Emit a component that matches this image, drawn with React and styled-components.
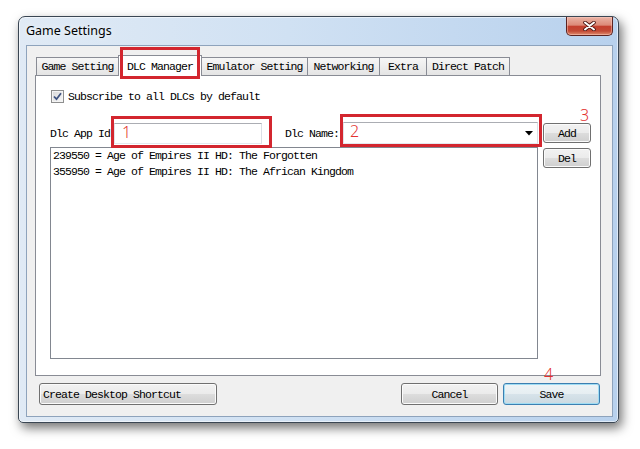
import React from 'react';
import styled, { createGlobalStyle } from 'styled-components';

const mono = `"Liberation Mono", "DejaVu Sans Mono", monospace`;

const Global = createGlobalStyle`
  html, body { margin: 0; padding: 0; background: #ffffff; }
  body { width: 640px; height: 449px; overflow: hidden; }
`;

const Page = styled.div`
  width: 640px;
  height: 449px;
  box-sizing: border-box;
  padding: 16px 0 0 18px;
  background: #ffffff;
`;

const Window = styled.div`
  width: 601px;
  height: 407px;
  box-sizing: border-box;
  border: 1px solid #3a4653;
  border-radius: 7px 7px 5px 5px;
  background: linear-gradient(to right, #e0eaf5 0%, #d0e1f3 45%, #b8d1ed 100%);
  box-shadow: 3px 5px 11px rgba(0, 0, 0, 0.55), inset 0 0 0 1px rgba(255, 255, 255, 0.55);
  display: flex;
  flex-direction: column;
  padding: 0 5px 5px 7px;
`;

const TitleBar = styled.div`
  height: 28px;
  display: flex;
  justify-content: space-between;
  align-items: flex-start;
`;

const Title = styled.div`
  font-family: "Segoe UI", "Noto Sans", sans-serif;
  font-size: 12.5px;
  line-height: 28px;
  color: #000;
  text-shadow: 0 0 6px rgba(255, 255, 255, 0.9);
`;

const CloseButton = styled.div`
  width: 47px;
  height: 19px;
  box-sizing: border-box;
  border: 1px solid #5b2320;
  border-top: none;
  border-radius: 0 0 5px 5px;
  background: linear-gradient(#eab3a5 0%, #dc8a78 45%, #c4402f 52%, #c24a35 78%, #e08e70 100%);
  box-shadow: inset 0 0 0 1px rgba(255, 210, 200, 0.45);
  display: flex;
  align-items: center;
  justify-content: center;
`;

const Client = styled.div`
  flex: 1;
  box-sizing: border-box;
  background: #f0f0f0;
  border: 1px solid #8ea3bc;
  padding: 9px 11px 11px 8px;
  display: flex;
  flex-direction: column;
  font-family: ${mono};
  font-size: 11.5px;
  letter-spacing: -0.9px;
  color: #000;
`;

const TabStrip = styled.div`
  height: 20px;
  display: flex;
  align-items: flex-end;
  padding-left: 1px;
`;

const Tab = styled.div`
  position: relative;
  width: ${p => p.$w}px;
  height: ${p => (p.$active ? 21 : 18)}px;
  margin-right: -1px;
  margin-bottom: ${p => (p.$active ? -1 : 0)}px;
  box-sizing: border-box;
  border: 1px solid #898c95;
  border-bottom: none;
  background: ${p => (p.$active ? '#ffffff' : 'linear-gradient(#f6f6f6, #e4e4e4)')};
  z-index: ${p => (p.$active ? 2 : 1)};
  display: flex;
  align-items: center;
  justify-content: center;
  white-space: nowrap;
`;

const Panel = styled.div`
  height: 301px;
  box-sizing: border-box;
  border: 1px solid #898c95;
  background: #ffffff;
  padding: 14px 8px 0 14px;
`;

const CheckRow = styled.div`
  height: 13px;
  display: flex;
  align-items: center;
  gap: 4px;
`;

const CheckBox = styled.div`
  width: 13px;
  height: 13px;
  margin-left: 1px;
  box-sizing: border-box;
  border: 1px solid #8e8f8f;
  background: linear-gradient(135deg, #d8d8d8, #f8f8f8);
  box-shadow: inset 0 0 0 1px #f4f4f4;
  display: flex;
  align-items: center;
  justify-content: center;
`;

const Grid = styled.div`
  margin-top: 19px;
  display: grid;
  grid-template-columns: 488px 48px;
  grid-template-rows: 22px 212px;
  column-gap: 5px;
  row-gap: 3px;
`;

const Fields = styled.div`
  display: flex;
  align-items: center;
`;

const FieldLabel = styled.div`
  width: ${p => p.$w}px;
  margin-left: ${p => p.$gap || 0}px;
  white-space: nowrap;
`;

const Anchor = styled.div`
  position: relative;
  display: flex;
`;

const TextInput = styled.div`
  width: 148px;
  height: 21px;
  box-sizing: border-box;
  border: 1px solid;
  border-color: #abadb3 #dbdfe6 #e3e9ef #e2e3ea;
  background: #ffffff;
`;

const Combo = styled.div`
  width: 195px;
  height: 22px;
  box-sizing: border-box;
  border: 1px solid;
  border-color: #abadb3 #dbdfe6 #e3e9ef #e2e3ea;
  background: #ffffff;
  display: flex;
  align-items: center;
  justify-content: flex-end;
  padding-right: 4px;
`;

const ListBox = styled.div`
  box-sizing: border-box;
  border: 1px solid #828790;
  background: #ffffff;
  padding: 0 2px;
  line-height: 16px;
  white-space: nowrap;
`;

const SideButtons = styled.div`
  display: flex;
  flex-direction: column;
`;

const Button = styled.div`
  position: relative;
  width: ${p => p.$w}px;
  height: ${p => p.$h}px;
  margin-top: ${p => p.$mt || 0}px;
  box-sizing: border-box;
  border: 1px solid ${p => (p.$default ? '#3c7fb1' : '#707070')};
  border-radius: 3px;
  background: ${p =>
    p.$default
      ? 'linear-gradient(#eef4f7 0%, #e6eef2 50%, #d7e3ea 50%, #cbd9e1 100%)'
      : 'linear-gradient(#f2f2f2 0%, #ebebeb 50%, #dddddd 50%, #cfcfcf 100%)'};
  box-shadow: ${p => (p.$default ? 'inset 0 0 0 1px #9fdcf3' : 'inset 0 0 0 1px #fbfbfb')};
  display: flex;
  align-items: center;
  justify-content: ${p => (p.$left ? 'flex-start' : 'center')};
  padding-left: ${p => (p.$left ? 3 : 0)}px;
  white-space: nowrap;
`;

const BottomRow = styled.div`
  margin-top: 7px;
  display: flex;
  align-items: center;
  gap: 5px;
  padding: 0 1px 0 4px;
`;

const Spacer = styled.div`
  flex: 1;
`;

const Annot = styled.span`
  position: absolute;
  pointer-events: none;
  box-sizing: border-box;
  border: 3px solid #d3262f;
  top: ${p => p.$t}px;
  right: ${p => p.$r}px;
  bottom: ${p => p.$b}px;
  left: ${p => p.$l}px;
  z-index: 5;
`;

const Num = styled.span`
  position: absolute;
  left: ${p => p.$x}px;
  top: ${p => p.$y}px;
  font-family: "Noto Sans", "Open Sans", sans-serif;
  font-weight: 300;
  font-size: 16px;
  line-height: 16px;
  letter-spacing: 0;
  color: #e3312f;
  z-index: 6;
`;

const tabs = [
  { label: 'Game Setting', w: 83 },
  { label: 'DLC Manager', w: 84, active: true },
  { label: 'Emulator Setting', w: 107 },
  { label: 'Networking', w: 73 },
  { label: 'Extra', w: 48 },
  { label: 'Direct Patch', w: 84 },
];

const dlcs = [
  '239550 = Age of Empires II HD: The Forgotten',
  '355950 = Age of Empires II HD: The African Kingdom',
];

export default function App() {
  return (
    <>
      <Global />
      <Page>
        <Window>
          <TitleBar>
            <Title>Game Settings</Title>
            <CloseButton>
              <svg width="13" height="10" viewBox="0 0 13 10">
                <path d="M2 1.5 L11 8.5 M11 1.5 L2 8.5" stroke="#4a1512" strokeWidth="3.6" strokeLinecap="round" />
                <path d="M2 1.5 L11 8.5 M11 1.5 L2 8.5" stroke="#ffffff" strokeWidth="2" strokeLinecap="round" />
              </svg>
            </CloseButton>
          </TitleBar>
          <Client>
            <TabStrip>
              {tabs.map(t => (
                <Tab key={t.label} $w={t.w} $active={t.active}>
                  {t.label}
                  {t.active && <Annot $t={-9} $r={1} $b={-3} $l={1} />}
                </Tab>
              ))}
            </TabStrip>
            <Panel>
              <CheckRow>
                <CheckBox>
                  <svg width="9" height="9" viewBox="0 0 9 9">
                    <path d="M1 4.5 L3.5 7.2 L8 1.2" fill="none" stroke="#3f5380" strokeWidth="1.8" />
                  </svg>
                </CheckBox>
                <span>Subscribe to all DLCs by default</span>
              </CheckRow>
              <Grid>
                <Fields>
                  <FieldLabel $w={64}>Dlc App Id</FieldLabel>
                  <Anchor>
                    <TextInput />
                    <Annot $t={-7} $r={-10} $b={-4} $l={-3} />
                    <Num $x={8} $y={1}>1</Num>
                  </Anchor>
                  <FieldLabel $w={58} $gap={23}>Dlc Name:</FieldLabel>
                  <Anchor>
                    <Combo>
                      <svg width="8" height="5" viewBox="0 0 8 5">
                        <path d="M0 0 H8 L4 4.5 Z" fill="#000" />
                      </svg>
                    </Combo>
                    <Annot $t={-8} $r={-4} $b={-3} $l={-3} />
                    <Num $x={7} $y={1}>2</Num>
                  </Anchor>
                </Fields>
                <SideButtons>
                  <Button $w={48} $h={20} $mt={1}>
                    Add
                    <Num $x={36} $y={-17}>3</Num>
                  </Button>
                </SideButtons>
                <ListBox>
                  {dlcs.map(d => (
                    <div key={d}>{d}</div>
                  ))}
                </ListBox>
                <SideButtons>
                  <Button $w={48} $h={20} $mt={1}>Del</Button>
                </SideButtons>
              </Grid>
            </Panel>
            <BottomRow>
              <Button $w={178} $h={22} $left>Create Desktop Shortcut</Button>
              <Spacer />
              <Button $w={97} $h={22}>Cancel</Button>
              <Button $w={97} $h={22} $default>
                Save
                <Num $x={40} $y={-18}>4</Num>
              </Button>
            </BottomRow>
          </Client>
        </Window>
      </Page>
    </>
  );
}
